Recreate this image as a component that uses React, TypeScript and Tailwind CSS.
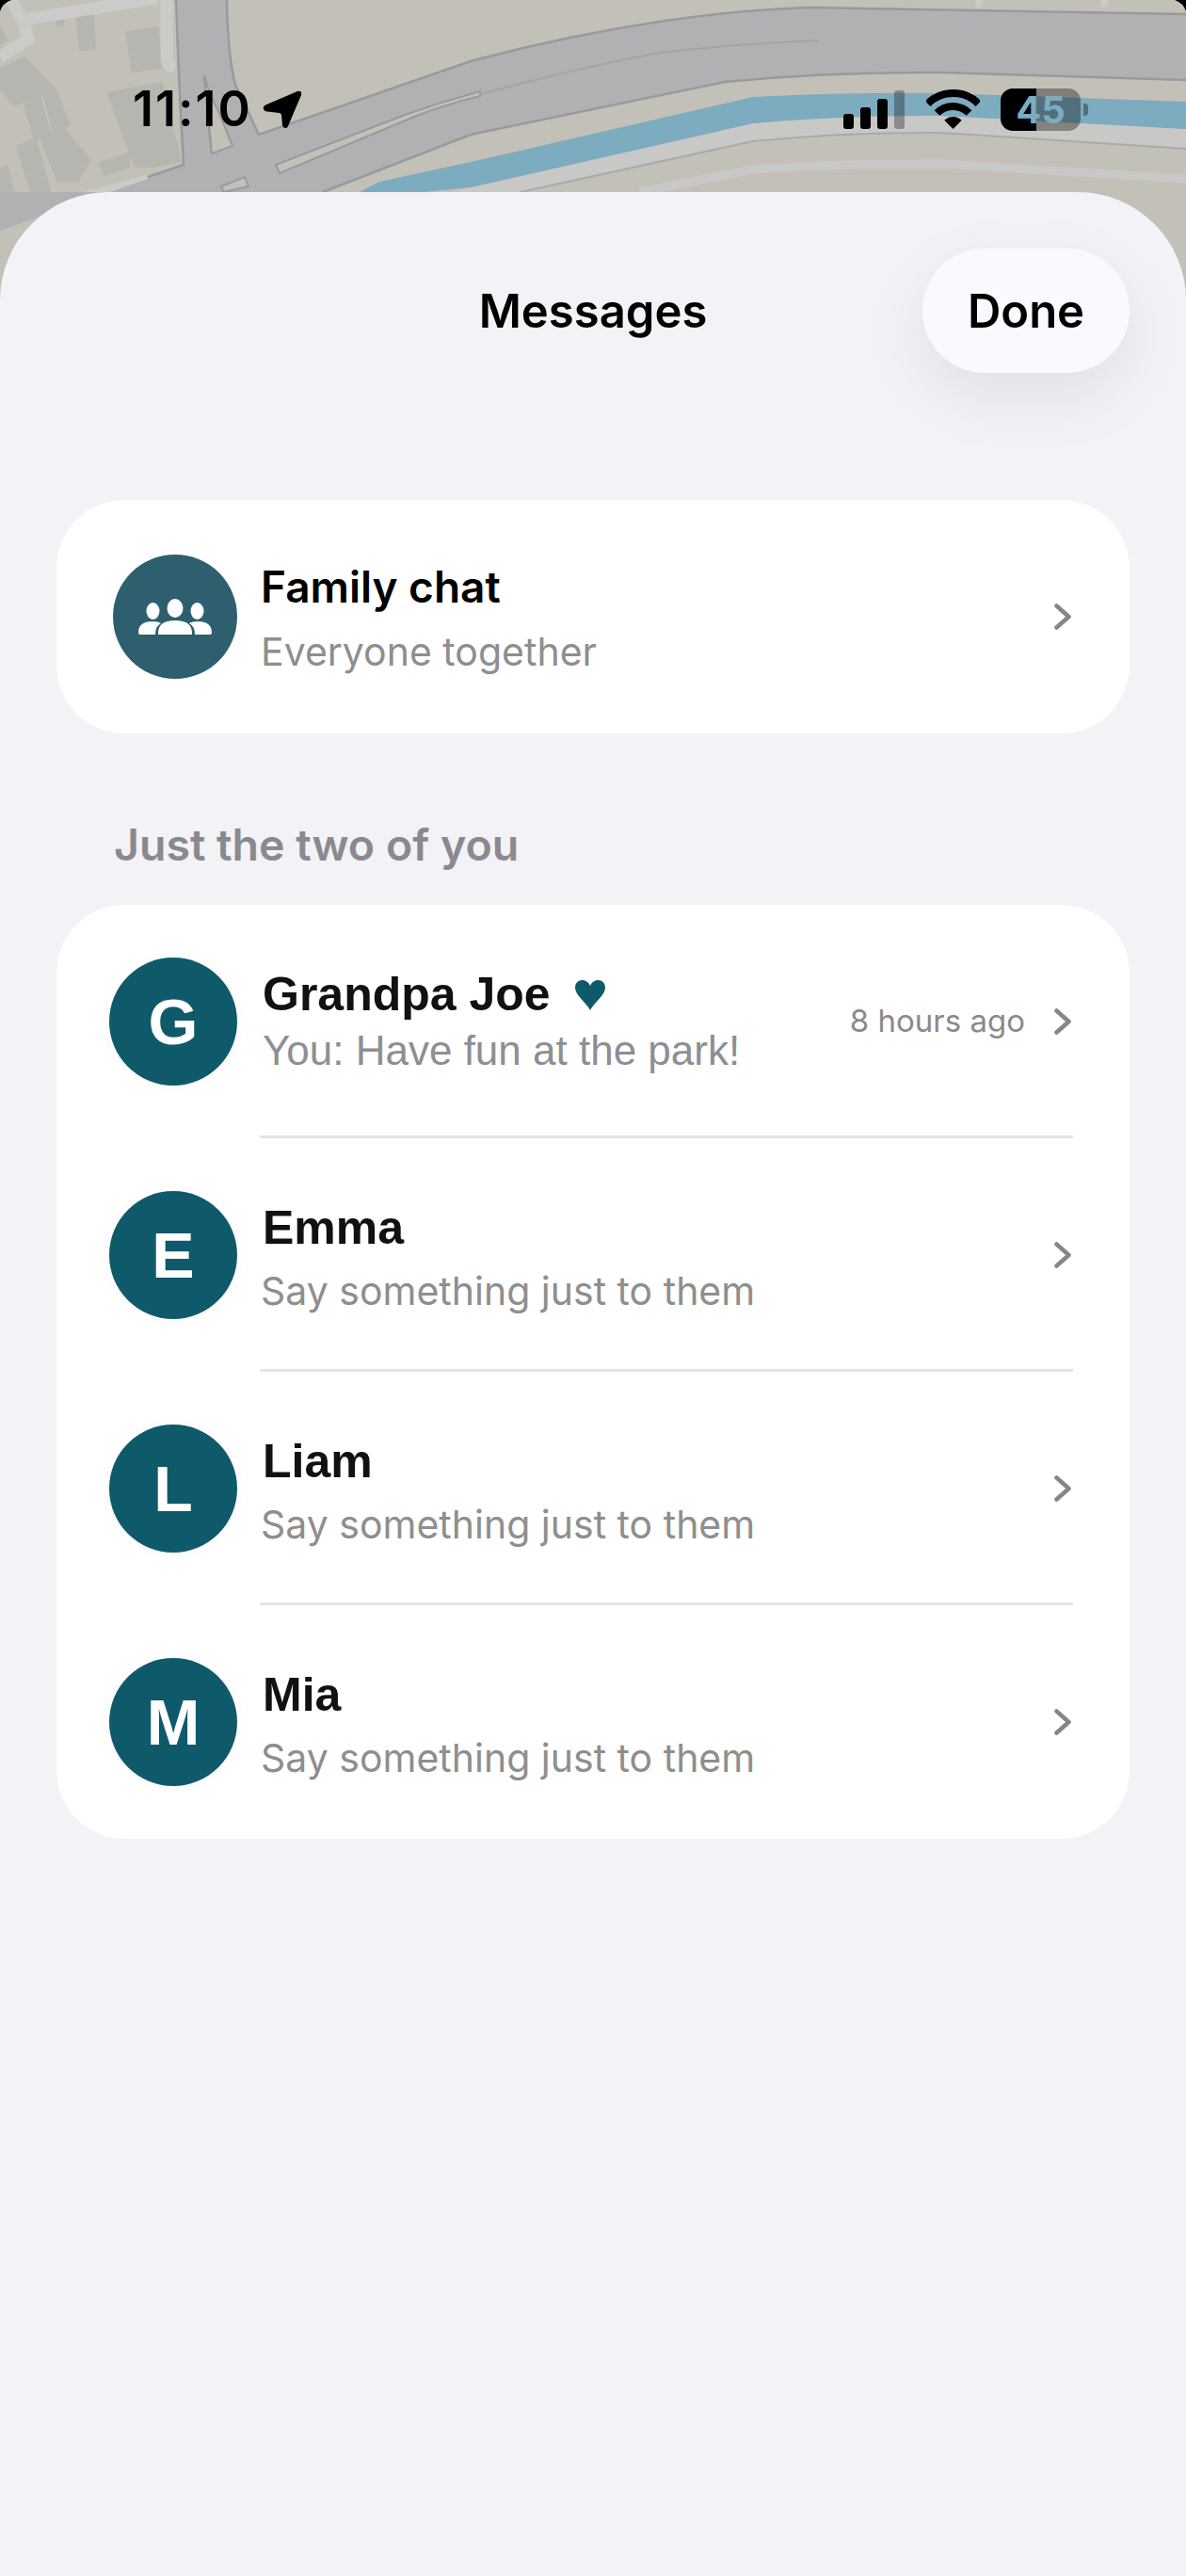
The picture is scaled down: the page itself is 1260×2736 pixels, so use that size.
import React from 'react';

const inter = 'font-["Inter",sans-serif]';
const arial = 'font-["Liberation_Sans",Arial,sans-serif]';

const people = [
  { letter: 'E', name: 'Emma' },
  { letter: 'L', name: 'Liam' },
  { letter: 'M', name: 'Mia' }
];

const MapBackdrop: React.FC = () => (
  <svg className="absolute left-0 top-0" width="1260" height="360" viewBox="0 0 1260 360">
    <rect width="1260" height="360" fill="#c3c0b7" />
    {/* buildings */}
    <g fill="#b6b5b0">
      <path d="M0 27 L8 43 L0 48Z" />
      <path d="M0 72 L26 60 L62 97 L14 113 L0 95Z" />
      <path d="M25 110 L43 103 L55 143 L36 150Z" />
      <path d="M46 102 L60 95 L75 133 L56 142Z" />
      <path d="M17 155 L38 146 L55 205 L33 207Z" />
      <path d="M42 146 L68 135 L97 170 L83 193 L60 193Z" />
      <path d="M0 178 L8 175 L17 210 L0 216Z" />
      <path d="M80 15 L100 15 L102 53 L84 54Z" />
      <path d="M60 18 L68 18 L68 28 L60 28Z" />
      <path d="M133 33 L168 28 L173 72 L140 78Z" />
      <path d="M113 98 L173 87 L193 172 L163 178 L143 178Z" />
      <path d="M105 172 L138 162 L138 178 L110 187Z" />
    </g>
    {/* minor roads */}
    <g fill="none" stroke="#cbcbc9" strokeWidth="13" strokeLinejoin="round">
      <path d="M0 60 L30 42 L26 26 L12 0" />
      <path d="M30 20 L167 -2" />
      <path d="M177 0 L177 60 Q177 70 186 72" />
      <path d="M-2 236 L157 192" />
      <path d="M1040 0 V8 M1173 0 V8" strokeWidth="7" />
    </g>
    {/* main roads */}
    <path
      d="M187 0 H241 Q242 60 250 90 L275 143 L500 65 Q600 38 707 22 Q790 10 860 8 L1260 15 V85 L1000 77 Q880 76 770 87 L500 143 L343 204 H0 V245 L157 190 L195 175 Q190 90 187 0Z"
      fill="#b0b1b3"
    />
    {/* road casings */}
    <g fill="none" stroke="#989a9c" strokeWidth="2.500">
      <path d="M187 0 Q190 90 195 175 L157 188" />
      <path d="M241 0 Q242 60 250 90 L275 143 L500 65 Q600 38 707 22 Q790 10 860 8 L1260 15" />
      <path d="M343 204 L500 143 L770 87 Q880 76 1000 77 L1260 85" />
      <path d="M500 103 Q600 75 700 56 Q790 46 870 43" stroke="#a3a4a6" strokeWidth="2" />
      <path d="M217 80 L225 163" />
    </g>
    {/* islands */}
    <path d="M225 163 L247 155 L232 118 Q222 100 217 80Z" fill="#c3c0b7" stroke="#989a9c" strokeWidth="2" />
    <path d="M293 175 L430 122 Q470 108 510 97 L510 102 Q470 112 440 124 L297 184Z" fill="#c3c0b7" stroke="#989a9c" strokeWidth="2" />
    <path d="M235 198 L260 188 L264 198 L238 204Z" fill="#c3c0b7" stroke="#989a9c" strokeWidth="2" />
    {/* river and the road under it */}
    <path d="M500 199 L800 131 Q900 122 1000 123 L1260 137 V158 L1000 141 Q900 140 800 150 L553 204 H480Z" fill="#c8c8c6" />
    <path d="M553 204 L800 150 Q900 140 1000 141 L1260 158" fill="none" stroke="#a9aaaa" strokeWidth="2" />
    <path d="M382 204 L403 193 L500 172 L800 103 Q900 98 1000 99 L1260 108 V137 L1000 123 Q900 122 800 131 L500 199 L450 204Z" fill="#7dabc0" />
    <path d="M680 204 L800 180 Q880 174 1000 174 L1260 190" fill="none" stroke="#c8c8c6" strokeWidth="9" />
    {/* screen corners */}
    <path d="M0 0 H12 Q3 3 0 12Z M1260 0 H1248 Q1257 3 1260 12Z" fill="#000" />
  </svg>
);

const LocationArrow: React.FC = () => (
  <svg className="ml-[11px]" width="42" height="41" viewBox="0 0 42 41">
    <path d="M37 1 L3 15.500 Q-1 18 2 21.500 Q3 22.500 5 22.500 L18 24 Q19.500 24.500 20 26 L21 37 Q22 40.500 25 40 Q26.500 39.500 27 38 L41 5 Q42 0 37 1Z" fill="#000" />
  </svg>
);

const SignalBars: React.FC = () => (
  <div className="flex items-end gap-[7px]">
    <div className="h-[16px] w-[11px] rounded-[3px] bg-black" />
    <div className="h-[23px] w-[11px] rounded-[3px] bg-black" />
    <div className="h-[32px] w-[11px] rounded-[3px] bg-black" />
    <div className="h-[41px] w-[11px] rounded-[3px] bg-black/30" />
  </div>
);

const Wifi: React.FC = () => (
  <svg width="57" height="42" viewBox="0 0 57 42">
    <path d="M28.500 42 L19.300 32.800 A13 13 0 0 1 37.700 32.800Z" fill="#000" />
    <path d="M11.500 25 A24 24 0 0 1 45.500 25" fill="none" stroke="#000" strokeWidth="8" />
    <path d="M1.600 15.100 A38 38 0 0 1 55.400 15.100" fill="none" stroke="#000" strokeWidth="8" />
  </svg>
);

const Battery: React.FC = () => (
  <div className="flex items-center gap-[3px]">
    <div className="relative flex h-[45px] w-[85px] items-center justify-center">
      <div className="absolute inset-0 flex overflow-hidden rounded-[13px]">
        <div className="w-[38px] bg-black" />
        <div className="flex-1 bg-black/35" />
      </div>
      <span className={`${inter} relative text-[40px] font-bold leading-[45px] text-[#7dabc0]`}>45</span>
    </div>
    <div className="h-[13px] w-[5px] rounded-r-[4px] bg-black/35" />
  </div>
);

const FamilyIcon: React.FC = () => (
  <svg width="78" height="38" viewBox="0 0 78 38">
    <g fill="#fff">
      <ellipse cx="39" cy="10" rx="8.500" ry="10" />
      <ellipse cx="15.500" cy="13" rx="7" ry="9" />
      <ellipse cx="62.500" cy="13" rx="7" ry="9" />
      <path d="M21 38 Q20 23 39 23 Q58 23 57 38Z" />
      <path d="M0 36 Q0 24 15 24 Q21 24 24 26 Q18 29 18 38 H2 Q0 38 0 36Z" />
      <path d="M78 36 Q78 24 63 24 Q57 24 54 26 Q60 29 60 38 H76 Q78 38 78 36Z" />
    </g>
  </svg>
);

const Heart: React.FC = () => (
  <svg className="ml-[25px] mt-[2px]" width="34" height="32" viewBox="0 0 34 32">
    <path d="M17 32 C13 24 1 16 1 8 C1 3 4.500 0 8.500 0 C12.500 0 15.500 2.500 17 6 C18.500 2.500 21.500 0 25.500 0 C29.500 0 33 3 33 8 C33 16 21 24 17 32Z" fill="#0f5a6a" />
  </svg>
);

const Chevron: React.FC = () => (
  <svg className="shrink-0" width="18" height="28" viewBox="0 0 18 28">
    <path d="M2.500 2.500 L15.500 14 L2.500 25.500" fill="none" stroke="#868686" strokeWidth="4.500" strokeLinecap="round" strokeLinejoin="round" />
  </svg>
);

const Avatar: React.FC<{ letter: string }> = ({ letter }) => (
  <div className={`${arial} flex h-[136px] w-[136px] shrink-0 items-center justify-center rounded-full bg-[#0f5a6a] text-[68px] font-bold leading-none text-white shadow-[0_0_0_7px_#fdfdfd]`}>
    {letter}
  </div>
);

const App: React.FC = () => {
  return (
    <div className="relative flex h-[2736px] w-[1260px] flex-col overflow-hidden bg-[#c3c0b7]">
      <MapBackdrop />

      {/* Status bar */}
      <div className="relative flex h-[204px] shrink-0 items-start justify-between pl-[141px] pr-[104px] pt-[88px]">
        <div className="flex h-[56px] items-center">
          <span className={`${inter} text-[52px] font-semibold leading-none tracking-[2px] text-black`}>11:10</span>
          <LocationArrow />
        </div>
        <div className="flex h-[56px] items-center">
          <SignalBars />
          <div className="ml-[23px] mr-[22px]"><Wifi /></div>
          <Battery />
        </div>
      </div>

      {/* Sheet */}
      <div className="relative flex-1 rounded-t-[115px] bg-[#f2f2f7] px-[60px] pt-[60px]">
        <div className="grid grid-cols-[1fr_auto_1fr] items-center">
          <div />
          <h1 className={`${inter} pt-[2px] text-[49px] font-semibold leading-[56px] text-black`}>Messages</h1>
          <div className="flex justify-end">
            <button className={`${inter} h-[132px] w-[220px] rounded-[66px] bg-[#faf9ff] pt-[2px] text-[49px] font-semibold text-black shadow-[0_24px_70px_rgba(0,0,0,0.08)]`}>Done</button>
          </div>
        </div>

        <div className="mt-[135px]">
          {/* Family chat */}
          <div className="flex h-[248px] items-center rounded-[72px] bg-white pl-[60px] pr-[62px]">
            <div className="flex h-[132px] w-[132px] shrink-0 items-center justify-center rounded-full bg-[#2e5f6e]">
              <FamilyIcon />
            </div>
            <div className={`${inter} ml-[25px] flex-1 pt-[1px]`}>
              <div className="text-[46px] font-semibold leading-[56px] text-black">Family chat</div>
              <div className="mt-[16px] text-[41px] leading-[50px] text-[#8e8e8e]">Everyone together</div>
            </div>
            <Chevron />
          </div>

          <div className={`${inter} ml-[61px] mt-[91px] text-[46.500px] font-semibold leading-[54px] text-[#8a8a8e]`}>Just the two of you</div>

          {/* People */}
          <div className="mt-[37px] rounded-[72px] bg-white">
            <div className="relative flex h-[248px] items-center pl-[56px] pr-[62px]">
              <Avatar letter="G" />
              <div className={`${arial} ml-[27px] flex-1`}>
                <div className="-mt-[2px] flex items-center text-[50px] font-bold leading-[56px] text-[#111]">
                  Grandpa Joe
                  <Heart />
                </div>
                <div className="mt-[7px] text-[44px] leading-[50px] text-[#8e8e93]">You: Have fun at the park!</div>
              </div>
              <span className={`${inter} mr-[31px] text-[33px] text-[#8a8a8a]`}>8 hours ago</span>
              <Chevron />
              <div className="absolute bottom-0 left-[216px] right-[60px] h-[3px] bg-[#e5e5e5]" />
            </div>
            {people.map((person, index) => (
              <div key={person.name} className="relative flex h-[248px] items-center pl-[56px] pr-[62px]">
                <Avatar letter={person.letter} />
                <div className="ml-[25px] flex-1 pt-[5px]">
                  <div className={`${arial} ml-[2px] text-[50px] font-bold leading-[56px] text-[#111]`}>{person.name}</div>
                  <div className={`${inter} mt-[14px] text-[41px] leading-[50px] text-[#8e8e8e]`}>Say something just to them</div>
                </div>
                <Chevron />
                {index < people.length - 1 && (
                  <div className="absolute bottom-0 left-[216px] right-[60px] h-[3px] bg-[#e5e5e5]" />
                )}
              </div>
            ))}
          </div>
        </div>
      </div>
    </div>
  );
};

export default App;
